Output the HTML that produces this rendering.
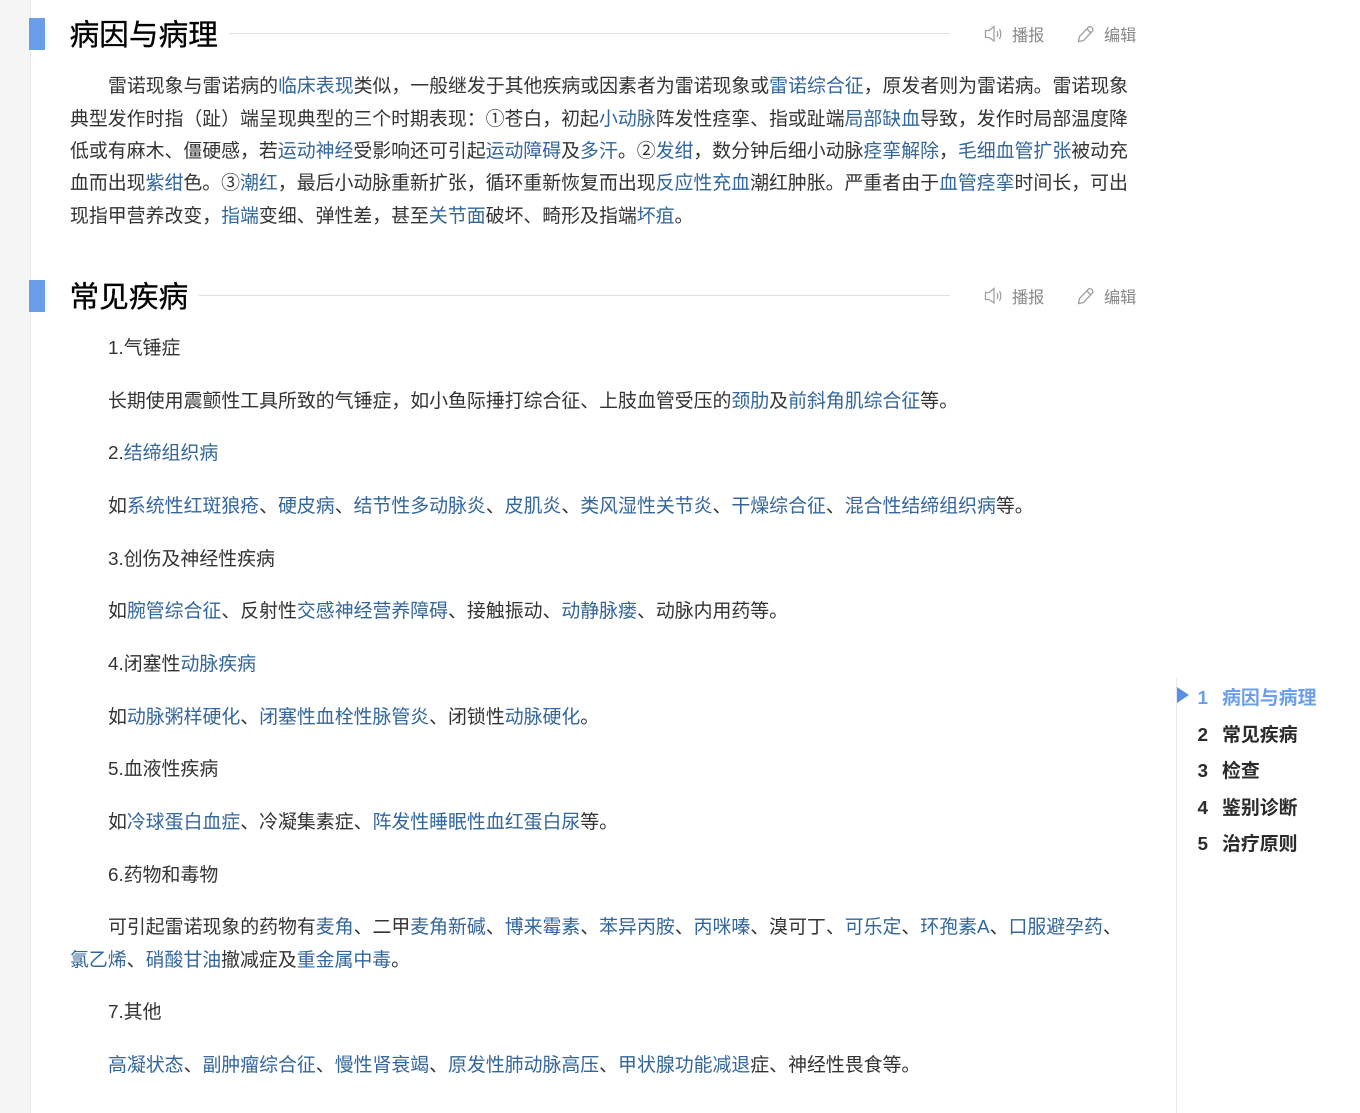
<!DOCTYPE html>
<html lang="zh"><head><meta charset="utf-8"><style>
html,body{margin:0;padding:0;background:#fff}
body{width:1360px;height:1113px;position:relative;overflow:hidden;font-family:"Liberation Sans","Noto Sans CJK SC",sans-serif;color:#333}
.bg{position:absolute;left:0;top:0;width:30px;height:1113px;background:#f5f5f5;border-right:1px solid #e6e6e6}
.bar{position:absolute;left:29px;width:16px;height:32px;background:#6b9ee8}
h2{position:absolute;left:69.500px;margin:0;font-size:29.700px;font-weight:400;line-height:40px;color:#000;white-space:nowrap;-webkit-text-stroke:.3px #000}
.rule{position:absolute;height:1px;background:#e0e0e0;right:410px}
.l{position:absolute;left:70px;white-space:nowrap;font-size:18.900px;line-height:32px;height:32px}
.i{left:108px}
a{color:#33669c;text-decoration:none}
.act{position:absolute;font-size:16.200px;line-height:22px;color:#888;white-space:nowrap}
svg{position:absolute;fill:none;stroke:#a0a0a0;stroke-width:1.300}
.toc{position:absolute;font-size:18.900px;font-weight:700;line-height:26px;color:#2b2b2b;white-space:nowrap}
.toc b{display:inline-block;width:24.500px}
.vl{position:absolute;left:1176px;top:678px;width:1px;height:435px;background:#e6e6e6}
</style></head><body>
<div class="bg"></div>
<div class="bar" style="top:18px"></div>
<h2 style="top:16px">病因与病理</h2>
<div class="rule" style="left:229px;top:33px"></div>
<svg style="left:984px;top:25px" width="20" height="18" viewBox="0 0 20 18"><path d="M1.500 5.500H5L10 1.500V16L5 12.500H1.500Z"/><path d="M13 6Q14.500 9 13 12M15.500 4Q18 9 15.500 14"/></svg>
<div class="act" style="left:1012px;top:25px">播报</div>
<svg style="left:1077px;top:25px" width="18" height="18" viewBox="0 0 18 18"><path d="M1.500 16.500L2.500 11.500L11.500 2Q13 1 15 2.500Q16.500 4.500 15.500 6L6.500 15.500Z"/><path d="M10 4L14 8"/></svg>
<div class="act" style="left:1104px;top:25px">编辑</div>

<div class="l i" style="top:71px">雷诺现象与雷诺病的<a>临床表现</a>类似，一般继发于其他疾病或因素者为雷诺现象或<a>雷诺综合征</a>，原发者则为雷诺病。雷诺现象</div>
<div class="l" style="top:104px">典型发作时指（趾）端呈现典型的三个时期表现：①苍白，初起<a>小动脉</a>阵发性痉挛、指或趾端<a>局部缺血</a>导致，发作时局部温度降</div>
<div class="l" style="top:136px">低或有麻木、僵硬感，若<a>运动神经</a>受影响还可引起<a>运动障碍</a>及<a>多汗</a>。②<a>发绀</a>，数分钟后细小动脉<a>痉挛解除</a>，<a>毛细血管扩张</a>被动充</div>
<div class="l" style="top:168px">血而出现<a>紫绀</a>色。③<a>潮红</a>，最后小动脉重新扩张，循环重新恢复而出现<a>反应性充血</a>潮红肿胀。严重者由于<a>血管痉挛</a>时间长，可出</div>
<div class="l" style="top:201px">现指甲营养改变，<a>指端</a>变细、弹性差，甚至<a>关节面</a>破坏、畸形及指端<a>坏疽</a>。</div>

<div class="bar" style="top:280px"></div>
<h2 style="top:278px">常见疾病</h2>
<div class="rule" style="left:199px;top:295px"></div>
<svg style="left:984px;top:287px" width="20" height="18" viewBox="0 0 20 18"><path d="M1.500 5.500H5L10 1.500V16L5 12.500H1.500Z"/><path d="M13 6Q14.500 9 13 12M15.500 4Q18 9 15.500 14"/></svg>
<div class="act" style="left:1012px;top:287px">播报</div>
<svg style="left:1077px;top:287px" width="18" height="18" viewBox="0 0 18 18"><path d="M1.500 16.500L2.500 11.500L11.500 2Q13 1 15 2.500Q16.500 4.500 15.500 6L6.500 15.500Z"/><path d="M10 4L14 8"/></svg>
<div class="act" style="left:1104px;top:287px">编辑</div>

<div class="l i" style="top:333px">1.气锤症</div>
<div class="l i" style="top:386px">长期使用震颤性工具所致的气锤症，如小鱼际捶打综合征、上肢血管受压的<a>颈肋</a>及<a>前斜角肌综合征</a>等。</div>
<div class="l i" style="top:438px">2.<a>结缔组织病</a></div>
<div class="l i" style="top:491px">如<a>系统性红斑狼疮</a>、<a>硬皮病</a>、<a>结节性多动脉炎</a>、<a>皮肌炎</a>、<a>类风湿性关节炎</a>、<a>干燥综合征</a>、<a>混合性结缔组织病</a>等。</div>
<div class="l i" style="top:544px">3.创伤及神经性疾病</div>
<div class="l i" style="top:596px">如<a>腕管综合征</a>、反射性<a>交感神经营养障碍</a>、接触振动、<a>动静脉瘘</a>、动脉内用药等。</div>
<div class="l i" style="top:649px">4.闭塞性<a>动脉疾病</a></div>
<div class="l i" style="top:702px">如<a>动脉粥样硬化</a>、<a>闭塞性血栓性脉管炎</a>、闭锁性<a>动脉硬化</a>。</div>
<div class="l i" style="top:754px">5.血液性疾病</div>
<div class="l i" style="top:807px">如<a>冷球蛋白血症</a>、冷凝集素症、<a>阵发性睡眠性血红蛋白尿</a>等。</div>
<div class="l i" style="top:860px">6.药物和毒物</div>
<div class="l i" style="top:912px">可引起雷诺现象的药物有<a>麦角</a>、二甲<a>麦角新碱</a>、<a>博来霉素</a>、<a>苯异丙胺</a>、<a>丙咪嗪</a>、溴可丁、<a>可乐定</a>、<a>环孢素A</a>、<a>口服避孕药</a>、</div>
<div class="l" style="top:945px"><a>氯乙烯</a>、<a>硝酸甘油</a>撤减症及<a>重金属中毒</a>。</div>
<div class="l i" style="top:997px">7.其他</div>
<div class="l i" style="top:1050px"><a>高凝状态</a>、<a>副肿瘤综合征</a>、<a>慢性肾衰竭</a>、<a>原发性肺动脉高压</a>、<a>甲状腺功能减退</a>症、神经性畏食等。</div>

<div class="vl"></div>
<div style="position:absolute;left:1177px;top:687px;width:0;height:0;border-left:12px solid #5b8fe6;border-top:8px solid transparent;border-bottom:8px solid transparent"></div>
<div class="toc" style="left:1197.500px;top:686px;color:#6b9ee8"><b>1</b>病因与病理</div>
<div class="toc" style="left:1197.500px;top:723px"><b>2</b>常见疾病</div>
<div class="toc" style="left:1197.500px;top:759px"><b>3</b>检查</div>
<div class="toc" style="left:1197.500px;top:796px"><b>4</b>鉴别诊断</div>
<div class="toc" style="left:1197.500px;top:832px"><b>5</b>治疗原则</div>
</body></html>
